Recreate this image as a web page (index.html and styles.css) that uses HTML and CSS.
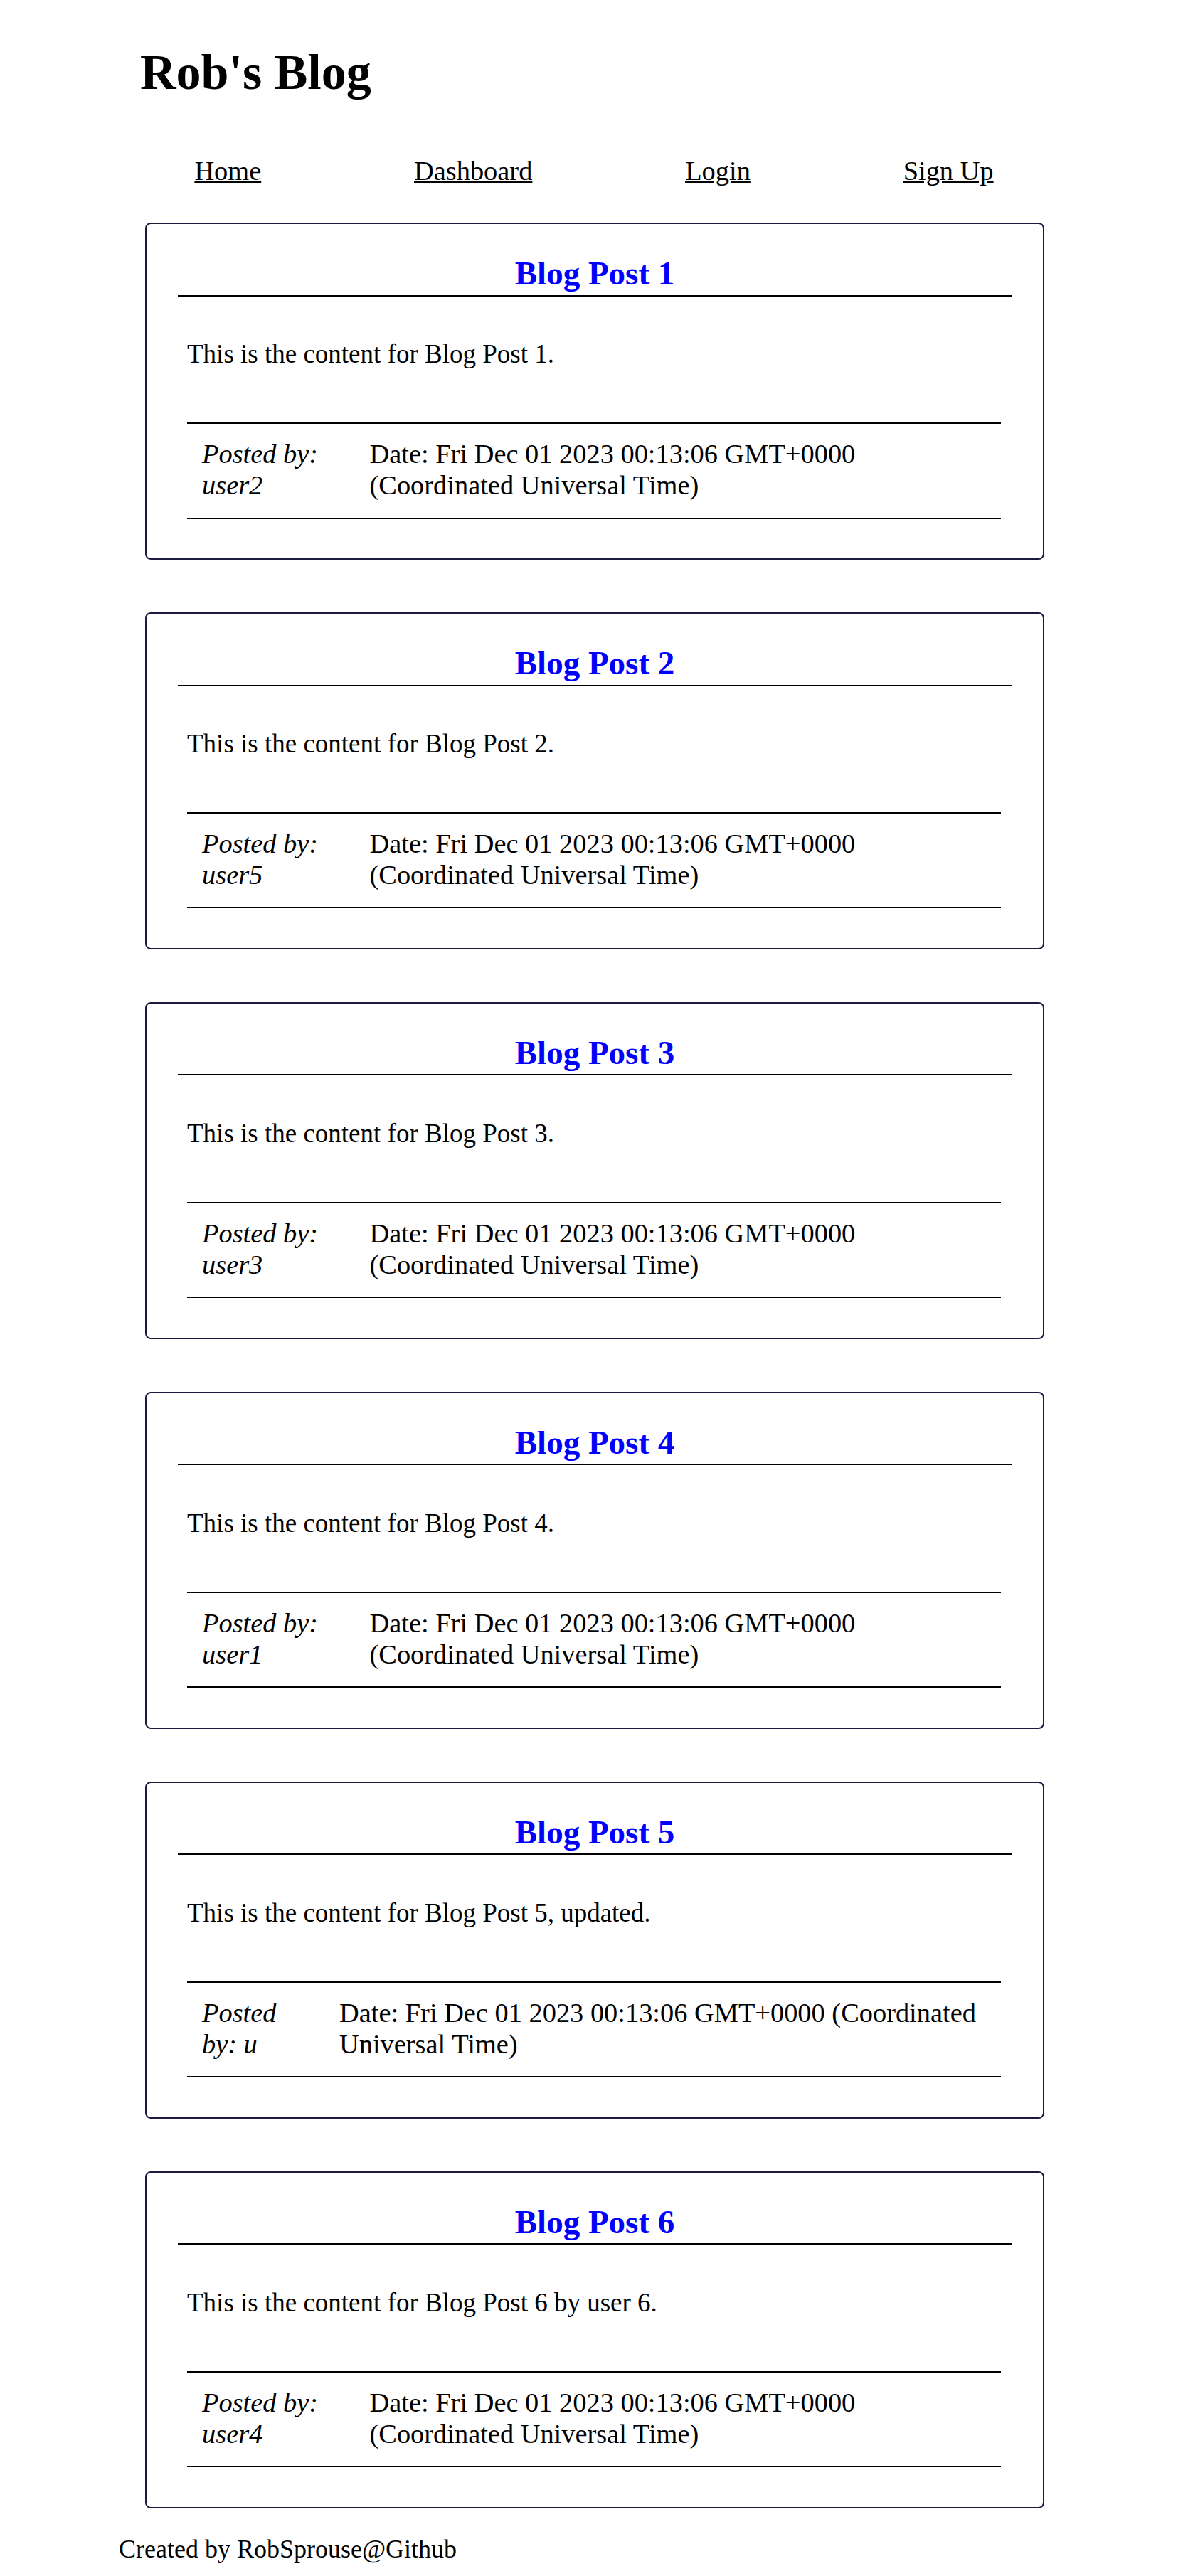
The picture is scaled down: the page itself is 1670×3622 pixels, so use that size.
FILE: index.html
```html
<!DOCTYPE html>
<html lang="en">
<head>
<meta charset="utf-8">
<title>Rob's Blog</title>
<link rel="stylesheet" href="styles.css">
</head>
<body>
<div class="page">
  <header class="site-header">
    <h1 class="site-title">Rob's Blog</h1>
    <nav class="site-nav">
      <a href="#">Home</a>
      <a href="#">Dashboard</a>
      <a href="#">Login</a>
      <a href="#">Sign Up</a>
    </nav>
  </header>

  <main class="posts">
    <article class="post">
      <h2 class="post-title">Blog Post 1</h2>
      <p class="post-body">This is the content for Blog Post 1.</p>
      <div class="post-meta">
        <div class="meta-author">Posted by: user2</div>
        <div class="meta-date">Date: Fri Dec 01 2023 00:13:06 GMT+0000 (Coordinated Universal Time)</div>
      </div>
    </article>
    <article class="post">
      <h2 class="post-title">Blog Post 2</h2>
      <p class="post-body">This is the content for Blog Post 2.</p>
      <div class="post-meta">
        <div class="meta-author">Posted by: user5</div>
        <div class="meta-date">Date: Fri Dec 01 2023 00:13:06 GMT+0000 (Coordinated Universal Time)</div>
      </div>
    </article>
    <article class="post">
      <h2 class="post-title">Blog Post 3</h2>
      <p class="post-body">This is the content for Blog Post 3.</p>
      <div class="post-meta">
        <div class="meta-author">Posted by: user3</div>
        <div class="meta-date">Date: Fri Dec 01 2023 00:13:06 GMT+0000 (Coordinated Universal Time)</div>
      </div>
    </article>
    <article class="post">
      <h2 class="post-title">Blog Post 4</h2>
      <p class="post-body">This is the content for Blog Post 4.</p>
      <div class="post-meta">
        <div class="meta-author">Posted by: user1</div>
        <div class="meta-date">Date: Fri Dec 01 2023 00:13:06 GMT+0000 (Coordinated Universal Time)</div>
      </div>
    </article>
    <article class="post">
      <h2 class="post-title">Blog Post 5</h2>
      <p class="post-body">This is the content for Blog Post 5, updated.</p>
      <div class="post-meta">
        <div class="meta-author">Posted by: u</div>
        <div class="meta-date">Date: Fri Dec 01 2023 00:13:06 GMT+0000 (Coordinated Universal Time)</div>
      </div>
    </article>
    <article class="post">
      <h2 class="post-title">Blog Post 6</h2>
      <p class="post-body">This is the content for Blog Post 6 by user 6.</p>
      <div class="post-meta">
        <div class="meta-author">Posted by: user4</div>
        <div class="meta-date">Date: Fri Dec 01 2023 00:13:06 GMT+0000 (Coordinated Universal Time)</div>
      </div>
    </article>
  </main>

  <footer class="site-footer">Created by RobSprouse@Github</footer>
</div>
</body>
</html>
```

FILE: styles.css
```css
html, body {
  margin: 0;
  padding: 0;
  background: #ffffff;
}

body {
  font-family: "Liberation Serif", "Times New Roman", serif;
  font-size: 38.4px;
  color: #000000;
}

.page {
  padding: 0 166px 18px 166px;
}

.site-title {
  font-size: 70px;
  font-weight: bold;
  line-height: 80.4px;
  margin: 62.2px 0 0 31px;
}

.site-nav {
  display: flex;
  justify-content: space-around;
  margin-top: 75.4px;
  line-height: 44.1px;
}

.site-nav a {
  color: #000000;
  text-decoration: underline;
}

.posts {
  display: flex;
  flex-direction: column;
  gap: 74px;
  margin-top: 50.9px;
}

.post {
  box-sizing: border-box;
  width: 1264px;
  margin-left: 38px;
  border: 2px solid #1b1b3f;
  border-radius: 8px;
  padding: 42px 44px 42px 44px;
}

.post-title {
  margin: 0;
  padding-bottom: 3.6px;
  border-bottom: 2px solid #000000;
  font-size: 47px;
  font-weight: bold;
  line-height: 54px;
  text-align: center;
  color: #0000ff;
}

.post-body {
  margin: 60.3px 15px 0 13px;
  font-size: 37px;
  line-height: 42.5px;
}

.post-meta {
  display: flex;
  margin: 74.8px 15px 13.4px 13px;
  padding: 19.7px 0 23.5px 0;
  border-top: 2px solid #000000;
  border-bottom: 2px solid #000000;
  line-height: 44.1px;
}

.meta-author {
  padding: 0 21px;
  font-style: italic;
}

.meta-date {
  padding: 0 21px;
}

.site-footer {
  margin: 37.5px 0 0 1px;
  font-size: 36px;
  line-height: 41.4px;
}
```
